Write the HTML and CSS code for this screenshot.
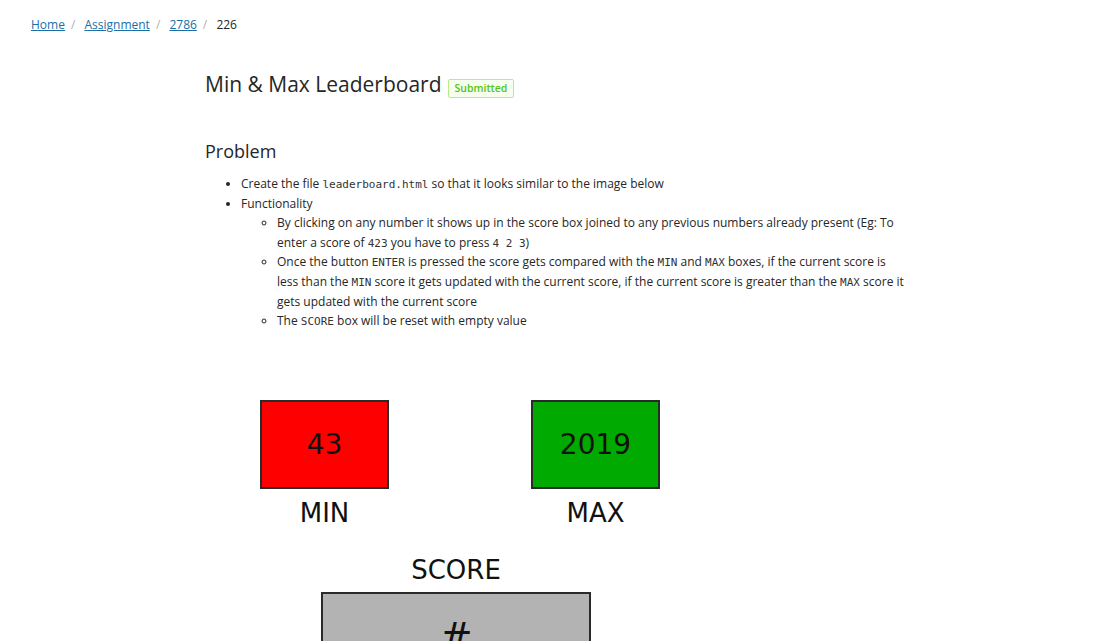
FILE: index.html
```html
<!DOCTYPE html>
<html lang="en">
<head>
<meta charset="utf-8">
<title>Min &amp; Max Leaderboard</title>
<link rel="stylesheet" href="styles.css">
</head>
<body>
<nav class="breadcrumb">
  <a href="#">Home</a><span class="sep">/</span>
  <a href="#">Assignment</a><span class="sep">/</span>
  <a href="#">2786</a><span class="sep">/</span>
  <span class="current">226</span>
</nav>
<main class="content">
  <header class="title-row">
    <h1 class="title">Min &amp; Max Leaderboard</h1>
    <span class="badge">Submitted</span>
  </header>
  <h2 class="section">Problem</h2>
  <ul class="list">
    <li>Create the file <code>leaderboard.html</code> so that it looks similar to the image below</li>
    <li>Functionality
      <ul class="sublist">
        <li>By clicking on any number it shows up in the score box joined to any previous numbers already present (Eg: To enter a score of <code>423</code> you have to press <code>4 2 3</code>)</li>
        <li>Once the button <code>ENTER</code> is pressed the score gets compared with the <code>MIN</code> and <code>MAX</code> boxes, if the current score is less than the <code>MIN</code> score it gets updated with the current score, if the current score is greater than the <code>MAX</code> score it gets updated with the current score</li>
        <li>The <code>SCORE</code> box will be reset with empty value</li>
      </ul>
    </li>
  </ul>
  <div class="figure">
    <div class="top-row">
      <div class="cell">
        <div class="box box-min">43</div>
        <div class="label">MIN</div>
      </div>
      <div class="cell">
        <div class="box box-max">2019</div>
        <div class="label">MAX</div>
      </div>
    </div>
    <div class="score-cell">
      <div class="label score-label">SCORE</div>
      <div class="score-box"><span class="hash">#</span></div>
    </div>
  </div>
</main>
</body>
</html>
```
FILE: styles.css
```css
html, body {
  margin: 0;
  padding: 0;
  background: #fff;
}
body {
  font-family: "Open Sans", "Noto Sans", sans-serif;
  color: #262626;
  overflow: hidden;
  height: 641px;
}
.breadcrumb {
  padding: 15px 0 0 31px;
  font-size: 12px;
  line-height: 20px;
  color: #262626;
}
.breadcrumb a {
  color: #1a6fa6;
  text-decoration: underline;
}
.breadcrumb .sep {
  color: #b0b0b0;
  margin: 0 6px;
}
.content {
  margin-left: 205px;
  width: 705px;
}
.title-row {
  display: flex;
  align-items: center;
  gap: 6px;
  margin-top: 34px;
}
.title {
  font-size: 21px;
  font-weight: 400;
  margin: 0;
  line-height: 30px;
  color: #262626;
}
.badge {
  font-size: 10.5px;
  font-weight: 600;
  line-height: 17px;
  padding: 0 6px;
  color: #52c41a;
  background: #f6ffed;
  border: 1px solid #b7eb8f;
  border-radius: 2px;
  margin-top: 9px;
}
.section {
  font-size: 18px;
  font-weight: 400;
  margin: 39px 0 0;
  line-height: 26px;
}
.list {
  margin: 10px 0 0;
  padding-left: 36px;
  font-size: 12px;
  line-height: 19.6px;
}
.sublist {
  list-style: circle;
  padding-left: 36px;
  margin: 0;
}
code {
  font-family: "DejaVu Sans Mono", monospace;
  font-size: 11px;
  line-height: 1;
  color: #333;
}
.figure {
  margin: 69px 0 0 55px;
  width: 400px;
  font-family: "DejaVu Sans", sans-serif;
  color: #111;
}
.top-row {
  display: flex;
  justify-content: space-between;
}
.cell {
  width: 129px;
  display: flex;
  flex-direction: column;
  align-items: center;
}
.box {
  box-sizing: border-box;
  width: 129px;
  height: 89px;
  border: 2px solid #2a2a2a;
  display: flex;
  align-items: center;
  justify-content: center;
  font-size: 28px;
}
.box-min { background: #ff0000; }
.box-max { background: #00aa00; }
.label {
  font-size: 26px;
  line-height: 48px;
}
.score-cell {
  margin-left: 61px;
  width: 270px;
  display: flex;
  flex-direction: column;
  align-items: center;
}
.score-label {
  margin-top: 11px;
  line-height: 44px;
  font-size: 26px;
}
.score-box {
  box-sizing: border-box;
  width: 270px;
  height: 49px;
  background: #b3b3b3;
  border: 2px solid #2a2a2a;
  border-bottom: 0;
  display: flex;
  justify-content: center;
  overflow: hidden;
}
.hash {
  font-size: 40px;
  line-height: 40px;
  margin-top: 24px;
}
```
